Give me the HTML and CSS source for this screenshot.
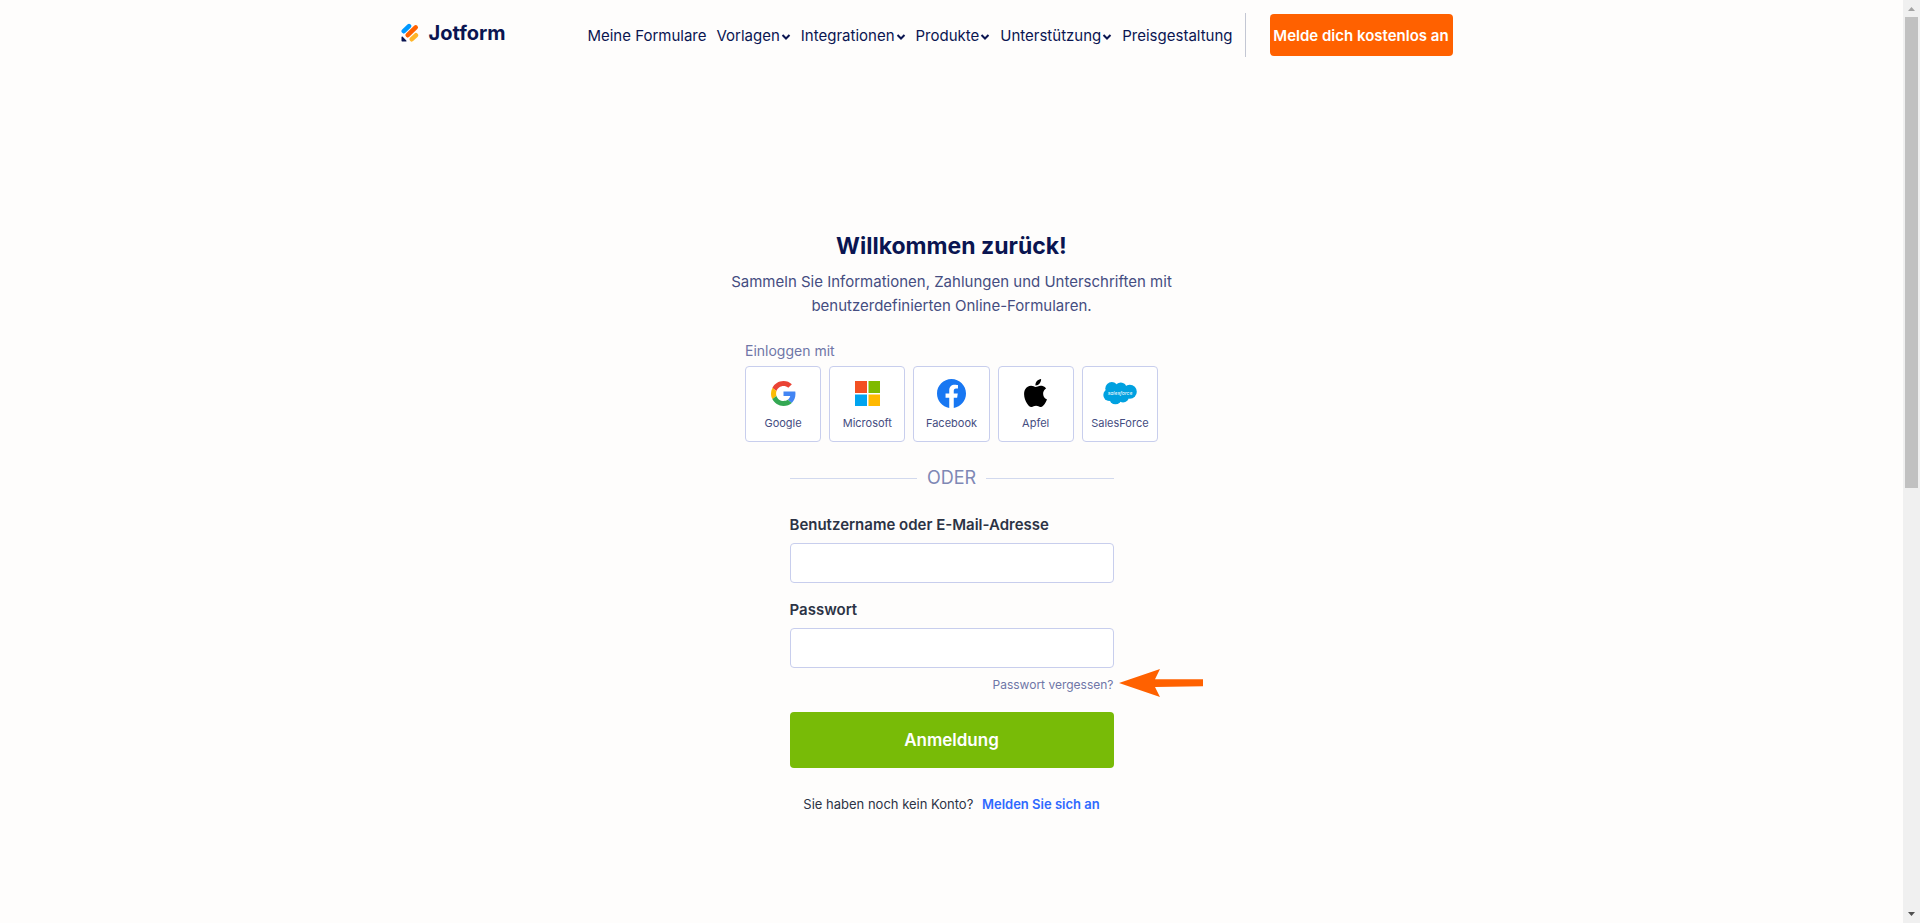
FILE: index.html
```html
<!DOCTYPE html>
<html lang="de">
<head>
  <meta charset="UTF-8">
  <meta name="viewport" content="width=device-width, initial-scale=1">
  <title>Jotform - Anmeldung</title>
  <link rel="stylesheet" href="styles.css">
</head>
<body>
  <div class="page">
    <header class="header">
      <a href="#" class="logo">
        <svg width="18" height="20" viewBox="0 0 18 20" fill="none" stroke-linecap="round" stroke-width="4.6" aria-hidden="true">
          <path d="M2.8 8.2 8 3.1" stroke="#0099ff"/>
          <path d="M6.7 12.2 14.7 4.4" stroke="#ff6100"/>
          <path d="M10.8 16.2 14.9 12.3" stroke="#ffb629"/>
          <path d="M.5 14.200v3.400c0 .6.4 1 1 1h3.300c.7 0 1-.7.5-1.200L1.700 13.700c-.5-.5-1.200-.2-1.200.5z" fill="#0a1551"/>
        </svg>
        <span>Jotform</span>
      </a>
      <nav class="nav">
        <a href="#">Meine Formulare</a>
        <a href="#">Vorlagen<svg class="chevron" viewBox="0 0 10 8"><path d="M1.500 2 5 5.500 8.500 2"/></svg></a>
        <a href="#">Integrationen<svg class="chevron" viewBox="0 0 10 8"><path d="M1.500 2 5 5.500 8.500 2"/></svg></a>
        <a href="#">Produkte<svg class="chevron" viewBox="0 0 10 8"><path d="M1.500 2 5 5.500 8.500 2"/></svg></a>
        <a href="#">Unterstützung<svg class="chevron" viewBox="0 0 10 8"><path d="M1.500 2 5 5.500 8.500 2"/></svg></a>
        <a href="#">Preisgestaltung</a>
      </nav>
      <div class="header-action">
        <button type="button" class="btn-signup">Melde dich kostenlos an</button>
      </div>
    </header>

    <main class="login">
      <h1>Willkommen zurück!</h1>
      <p class="intro">Sammeln Sie Informationen, Zahlungen und Unterschriften mit benutzerdefinierten Online-Formularen.</p>

      <section class="social">
        <p class="social-title">Einloggen mit</p>
        <div class="social-list">
          <button type="button">
            <svg width="25" height="25" viewBox="0 0 48 48" aria-hidden="true">
              <path fill="#ea4335" d="M24 9.500c3.540 0 6.710 1.220 9.210 3.600l6.850-6.850C35.900 2.380 30.470 0 24 0 14.620 0 6.510 5.380 2.560 13.220l7.980 6.190C12.430 13.720 17.740 9.500 24 9.500z"/>
              <path fill="#4285f4" d="M46.980 24.550c0-1.570-.15-3.090-.38-4.550H24v9.020h12.940c-.58 2.960-2.260 5.480-4.780 7.180l7.730 6c4.510-4.180 7.090-10.360 7.090-17.650z"/>
              <path fill="#fbbc05" d="M10.530 28.590c-.48-1.450-.76-2.990-.76-4.590s.27-3.140.76-4.590l-7.980-6.190C.92 16.460 0 20.120 0 24s.92 7.540 2.560 10.780l7.970-6.190z"/>
              <path fill="#34a853" d="M24 48c6.480 0 11.930-2.130 15.890-5.810l-7.730-6c-2.150 1.450-4.920 2.300-8.160 2.300-6.260 0-11.570-4.220-13.470-9.910l-7.980 6.190C6.510 42.620 14.620 48 24 48z"/>
            </svg>
            <span>Google</span>
          </button>
          <button type="button">
            <svg width="25" height="25" viewBox="0 0 25 25" aria-hidden="true">
              <path fill="#f25022" d="M0 0h12v12H0z"/>
              <path fill="#7fba00" d="M13.500 0h11.500v12H13.500z"/>
              <path fill="#00a4ef" d="M0 13.500h12V25H0z"/>
              <path fill="#ffb900" d="M13.500 13.500H25V25H13.500z"/>
            </svg>
            <span>Microsoft</span>
          </button>
          <button type="button">
            <svg width="29" height="29" viewBox="0 0 24 24" aria-hidden="true">
              <circle cx="12" cy="12" r="11.500" fill="#fff"/>
              <path fill="#1877f2" d="M24 12.073C24 5.446 18.627.073 12 .073S0 5.446 0 12.073c0 5.990 4.388 10.954 10.125 11.854v-8.385H7.078v-3.470h3.047V9.430c0-3.007 1.792-4.669 4.533-4.669 1.312 0 2.686.235 2.686.235v2.953H15.830c-1.491 0-1.956.925-1.956 1.874v2.250h3.328l-.532 3.470h-2.796v8.385C19.612 23.027 24 18.062 24 12.073z"/>
            </svg>
            <span>Facebook</span>
          </button>
          <button type="button">
            <svg width="29" height="28" viewBox="0 0 24 24" aria-hidden="true">
              <path d="M12.152 6.896c-.948 0-2.415-1.078-3.960-1.040-2.040.027-3.910 1.183-4.961 3.014-2.117 3.675-.546 9.103 1.519 12.090 1.013 1.454 2.208 3.090 3.792 3.039 1.520-.065 2.090-.987 3.935-.987 1.831 0 2.350.987 3.960.948 1.637-.026 2.676-1.480 3.676-2.948 1.156-1.688 1.636-3.325 1.662-3.415-.039-.013-3.182-1.221-3.220-4.857-.026-3.040 2.480-4.494 2.597-4.559-1.429-2.090-3.623-2.324-4.390-2.376-2-.156-3.675 1.090-4.610 1.090zM15.530 3.830c.843-1.012 1.400-2.427 1.245-3.830-1.207.052-2.662.805-3.532 1.818-.780.896-1.454 2.338-1.273 3.714 1.338.104 2.715-.688 3.559-1.701"/>
            </svg>
            <span>Apfel</span>
          </button>
          <button type="button">
            <svg width="34" height="24" viewBox="0 0 34 24" aria-hidden="true">
              <g fill="#00a1e0">
                <circle cx="8.800" cy="7.500" r="6.500"/><circle cx="17.800" cy="7.200" r="5.800"/>
                <circle cx="26.800" cy="10.800" r="7"/><circle cx="6.200" cy="14" r="5.900"/>
                <circle cx="12.400" cy="17" r="6.300"/><circle cx="20" cy="15.500" r="6"/>
              </g>
              <text x="17" y="13.500" text-anchor="middle" class="sf-mark">salesforce</text>
            </svg>
            <span>SalesForce</span>
          </button>
        </div>
      </section>

      <form class="form">
        <div class="divider">ODER</div>
        <label for="username">Benutzername oder E-Mail-Adresse</label>
        <input type="text" id="username" name="username">
        <label for="password">Passwort</label>
        <input type="password" id="password" name="password">
        <div class="forgot">
          <a href="#">Passwort vergessen?</a>
          <svg class="arrow" width="84" height="28" viewBox="0 0 84 28" aria-hidden="true"><path fill="#ff6100" d="M0 14 41 0 36 10.300H84v7L36 18 41 28z"/></svg>
        </div>
        <button type="submit" class="btn-login">Anmeldung</button>
        <p class="register">Sie haben noch kein Konto? <a href="#">Melden Sie sich an</a></p>
      </form>
    </main>
  </div>

  <div class="scrollbar" aria-hidden="true">
    <svg width="7" height="4" viewBox="0 0 7 4"><path fill="#a3a3a3" d="M3.500 0 7 4H0z"/></svg>
    <div class="track"><div class="thumb"></div></div>
    <svg width="7" height="4" viewBox="0 0 7 4"><path fill="#505050" d="M0 0h7L3.500 4z"/></svg>
  </div>
</body>
</html>
```
FILE: styles.css
```css
* {
  box-sizing: border-box;
}
body {
  margin: 0;
  display: flex;
  min-height: 100vh;
  background: #fefdfc;
  color: #0a1551;
  font-family: Inter, "Liberation Sans", sans-serif;
  font-size: 15px;
}
a {
  color: inherit;
  text-decoration: none;
}
button {
  font-family: inherit;
  cursor: pointer;
}
.page {
  flex: 1;
}

/* header */
.header {
  display: flex;
  align-items: center;
  max-width: 1104px;
  height: 70px;
  margin: 0 auto;
  padding: 0 51px 0 1px;
}
.logo {
  display: flex;
  align-items: center;
  gap: 10px;
  margin-bottom: 5px;
  font-size: 20px;
  font-weight: 700;
}
.nav {
  display: flex;
  gap: 10px;
  margin-left: auto;
  white-space: nowrap;
}
.chevron {
  width: 10px;
  height: 8px;
  margin-left: 1px;
  fill: none;
  stroke: #0a1551;
  stroke-width: 2;
}
.header-action {
  margin-left: 12px;
  padding: 1px 0 1px 24px;
  border-left: 1px solid #c3c7d3;
}
.btn-signup {
  display: block;
  width: 183px;
  height: 42px;
  padding: 0;
  border: 0;
  border-radius: 4px;
  background: #ff6100;
  color: #fff;
  font-size: 15px;
  font-weight: 600;
}

/* login */
.login {
  display: flex;
  flex-direction: column;
  align-items: center;
  padding-top: 160px;
}
h1 {
  margin: 0;
  font-size: 23px;
  line-height: 32px;
  font-weight: 700;
}
.intro {
  width: 460px;
  margin: 8px 0 23px;
  color: #454d81;
  line-height: 24px;
  text-align: center;
}
.social {
  width: 413px;
}
.social-title {
  margin: 0 0 5px;
  color: #6f76a7;
  font-size: 14px;
  line-height: 20px;
}
.social-list {
  display: grid;
  grid-template-columns: repeat(5, 1fr);
  gap: 8px;
}
.social-list button {
  display: grid;
  grid-template-rows: 32px 16px;
  align-items: center;
  justify-items: center;
  gap: 6px;
  height: 76px;
  padding: 0;
  border: 1px solid #c8ceed;
  border-radius: 4px;
  background: #fff;
  color: #454d81;
  font-size: 11px;
  align-content: center;
}
.sf-mark {
  fill: #fff;
  font-size: 5px;
  font-style: italic;
}

/* form */
.form {
  width: 324px;
}
.divider {
  display: flex;
  align-items: center;
  gap: 10px;
  margin: 24px 0 25px;
  color: #7f88b5;
  font-size: 18px;
  line-height: 24px;
}
.divider::before,
.divider::after {
  content: "";
  flex: 1;
  height: 1px;
  background: #d2d9ee;
}
.form label {
  display: block;
  margin-bottom: 8px;
  color: #2c3345;
  font-size: 15px;
  line-height: 20px;
  font-weight: 600;
}
.form input {
  display: block;
  width: 100%;
  height: 40px;
  margin-bottom: 17px;
  padding: 0 12px;
  border: 1px solid #c8ceed;
  border-radius: 4px;
  background: #fff;
  font-size: 16px;
}
.forgot {
  position: relative;
  margin: -8px 0 19px;
  color: #6f76a7;
  font-size: 12px;
  line-height: 16px;
  text-align: right;
}
.arrow {
  position: absolute;
  left: 100%;
  top: -8px;
  margin-left: 5px;
}
.btn-login {
  display: block;
  width: 100%;
  height: 56px;
  border: 0;
  border-radius: 4px;
  background: #78bb07;
  color: #fff;
  font-size: 17px;
  font-weight: 600;
}
.register {
  margin: 26px 0 0;
  color: #2c3345;
  font-size: 13px;
  line-height: 20px;
  text-align: center;
}
.register a {
  margin-left: 5px;
  color: #2e69ff;
  font-weight: 600;
}

/* scrollbar */
.scrollbar {
  display: flex;
  flex-direction: column;
  align-items: center;
  width: 17px;
  padding: 7px 2px;
  background: #f0f0f0;
}
.track {
  flex: 1;
  width: 13px;
  margin: 6px 0;
}
.thumb {
  height: 53%;
  background: #c1c1c1;
}
```
